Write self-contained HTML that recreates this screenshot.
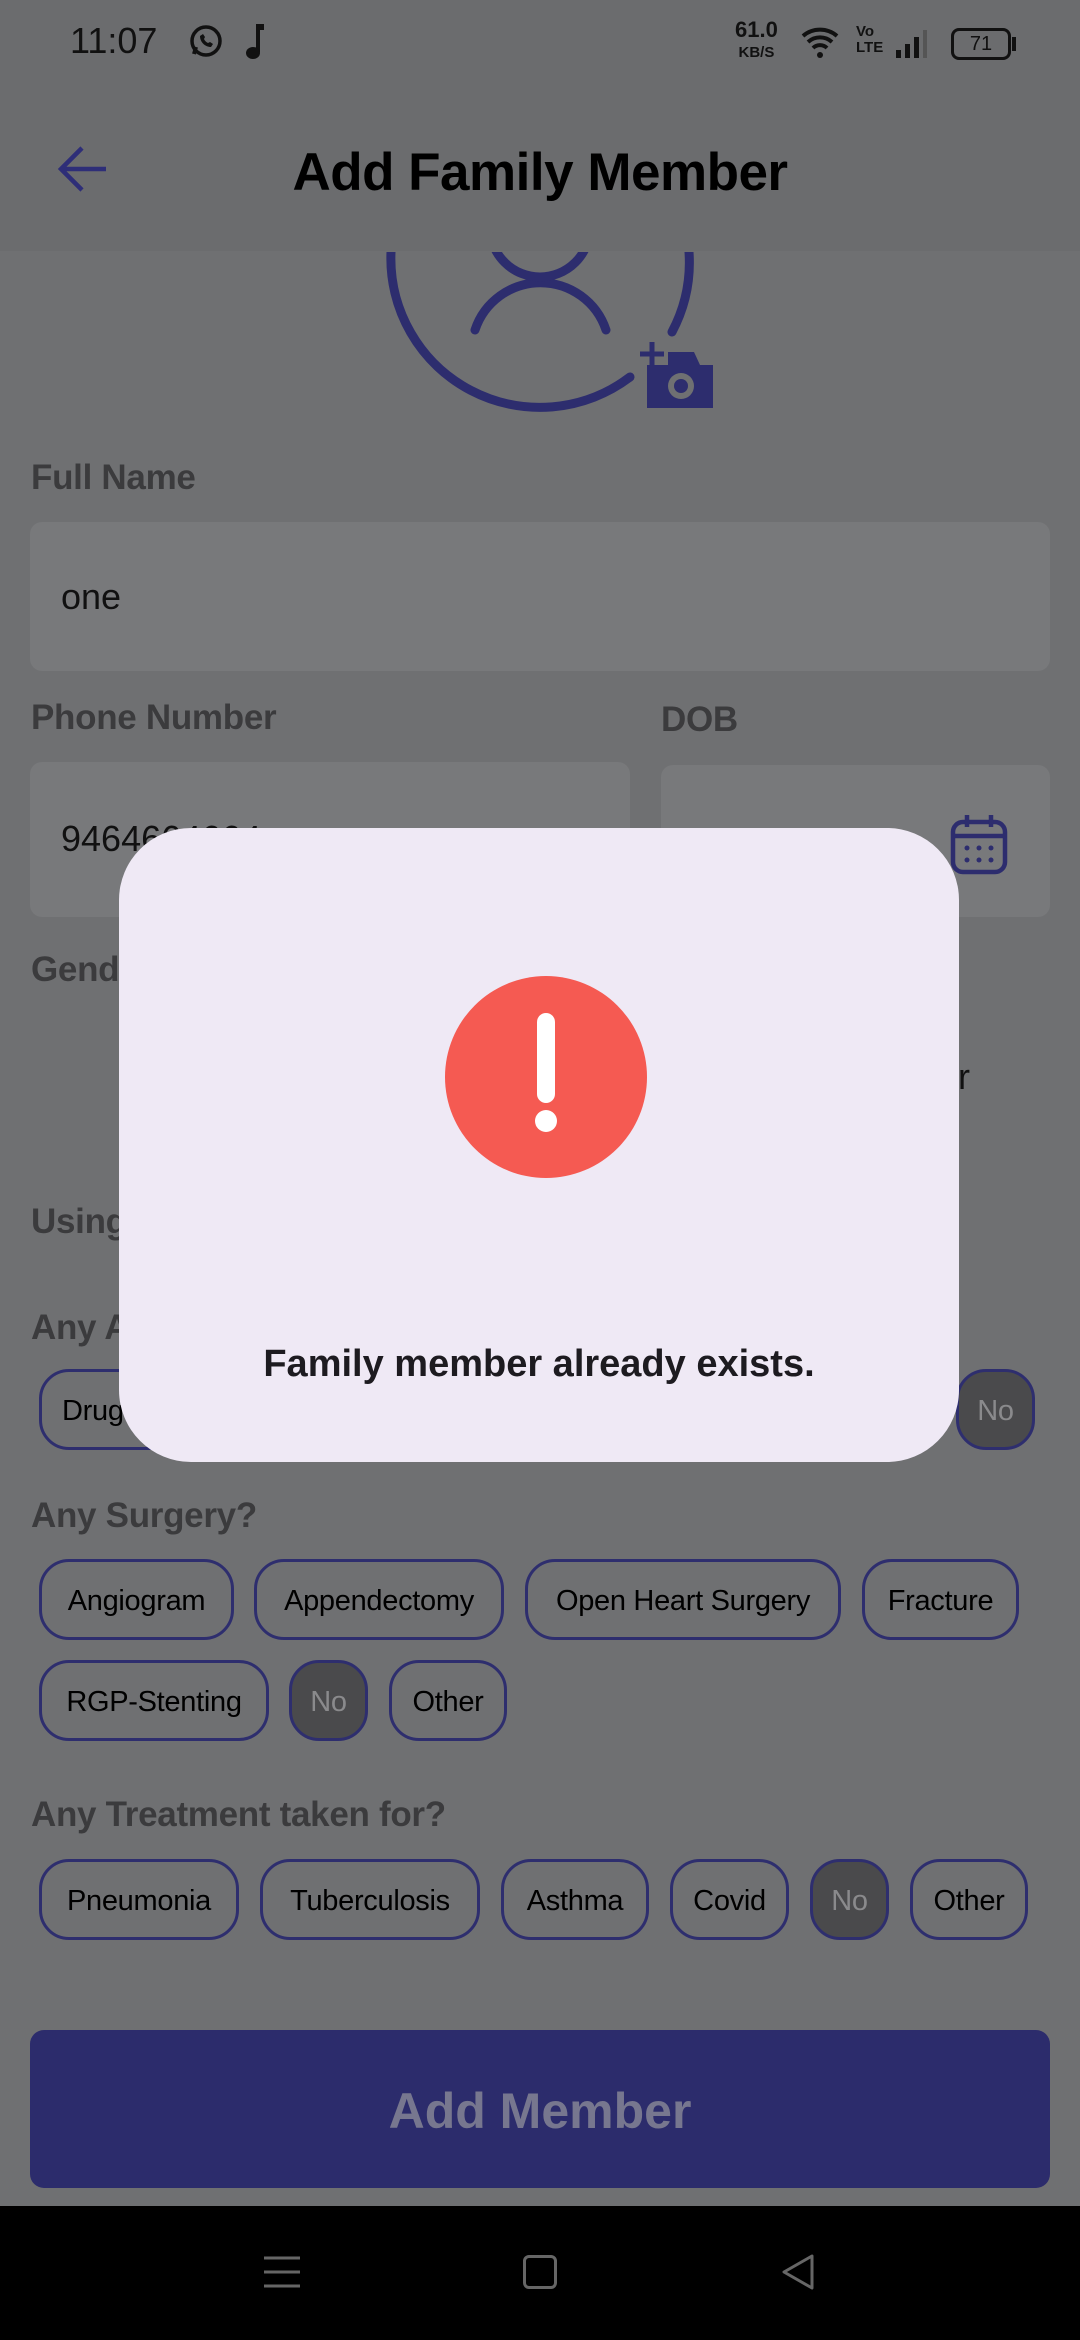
<!DOCTYPE html>
<html><head><meta charset="utf-8"><style>
*{margin:0;padding:0;box-sizing:border-box}
body{width:1080px;height:2340px;background:#6f7072;position:relative;overflow:hidden;font-family:"Liberation Sans",sans-serif}
.a{position:absolute}
.lbl{position:absolute;left:31px;font-size:35px;font-weight:bold;color:#3b3b3d;letter-spacing:-0.3px}
.fld{position:absolute;background:#78797b;border-radius:12px}
.chip{position:absolute;height:81px;border:3px solid #2e2e6e;border-radius:30px;display:flex;align-items:center;justify-content:center;font-size:29px;color:#000;letter-spacing:-0.3px;white-space:nowrap;padding-top:3px}
.dk{background:#4a4a4c;color:#8a8a8c}
</style></head><body>
<div class="a" style="left:0;top:0;width:1080px;height:251px;background:#6b6c6e"></div>
<div class="a" style="left:70px;top:20px;font-size:36px;color:#111">11:07</div>
<svg class="a" style="left:188px;top:24px" width="36" height="36" viewBox="0 0 36 36"><circle cx="18" cy="17" r="14" fill="none" stroke="#111" stroke-width="3.5"/><path d="M6 30 L8 23" stroke="#111" stroke-width="4"/><path d="M12 12c0 6 5 11 11 11l2-3-3-2-2 1c-2-1-3-2-4-4l1-2-2-3z" fill="#111"/></svg>
<svg class="a" style="left:244px;top:22px" width="26" height="40" viewBox="0 0 26 40"><path d="M14 2v28" stroke="#111" stroke-width="4"/><ellipse cx="9" cy="31" rx="7" ry="6" fill="#111"/><path d="M14 2h6v6h-6" fill="#111"/></svg>
<div class="a" style="left:735px;top:20px;font-size:22px;font-weight:bold;color:#111;line-height:20px;text-align:center">61.0<br><span style="font-size:15px">KB/S</span></div>
<svg class="a" style="left:800px;top:24px" width="44" height="36" viewBox="0 0 44 36"><path d="M3 12a26 26 0 0 1 34 0M8 18a18 18 0 0 1 24 0M13 24a10 10 0 0 1 14 0" fill="none" stroke="#111" stroke-width="4"/><circle cx="20" cy="31" r="3" fill="#111"/></svg>
<div class="a" style="left:856px;top:24px;font-size:15px;font-weight:bold;color:#111;line-height:16px">Vo<br>LTE</div>
<svg class="a" style="left:894px;top:28px" width="40" height="32" viewBox="0 0 40 32"><rect x="2" y="22" width="5" height="8" fill="#111"/><rect x="11" y="16" width="5" height="14" fill="#111"/><rect x="20" y="9" width="5" height="21" fill="#111"/><rect x="29" y="2" width="4" height="28" fill="#555"/></svg>
<div class="a" style="left:951px;top:28px;width:60px;height:32px;border:3px solid #111;border-radius:8px;font-size:20px;text-align:center;line-height:26px;color:#111">71</div>
<div class="a" style="left:1012px;top:37px;width:4px;height:14px;background:#111"></div>
<svg class="a" style="left:56px;top:144px" width="54" height="50" viewBox="0 0 54 50"><path d="M50 25H6M26 4L5 25l21 21" fill="none" stroke="#2e2e78" stroke-width="4.5"/></svg>
<div class="a" style="left:0;width:1080px;top:142px;text-align:center;font-size:53px;font-weight:bold;color:#000;letter-spacing:-0.5px">Add Family Member</div>
<svg class="a" style="left:380px;top:252px" width="350" height="170" viewBox="380 252 350 170"><path d="M689 252 A149 149 0 0 1 672 332" fill="none" stroke="#2d2d6e" stroke-width="9" stroke-linecap="round"/><path d="M391 252 A149 149 0 0 0 630 377" fill="none" stroke="#2d2d6e" stroke-width="9" stroke-linecap="round"/><path d="M475 330 A69 69 0 0 1 606 330" fill="none" stroke="#2d2d6e" stroke-width="9" stroke-linecap="round"/><circle cx="540" cy="227" r="50" fill="none" stroke="#2d2d6e" stroke-width="9"/><path d="M647 365h66v43h-66z" fill="#2d2d6e"/><path d="M668 352h26l6 13h-32z" fill="#2d2d6e"/><circle cx="681" cy="386" r="13" fill="#6f7072"/><circle cx="681" cy="386" r="7" fill="#2d2d6e"/><path d="M652 342v24M640 354h24" stroke="#2d2d6e" stroke-width="5"/></svg>
<div class="lbl" style="top:458px">Full Name</div>
<div class="fld" style="left:30px;top:522px;width:1020px;height:149px"></div>
<div class="a" style="left:61px;top:576px;font-size:36px;color:#111">one</div>
<div class="lbl" style="top:698px">Phone Number</div>
<div class="lbl" style="top:700px;left:661px">DOB</div>
<div class="fld" style="left:30px;top:762px;width:600px;height:155px"></div>
<div class="a" style="left:61px;top:818px;font-size:36px;color:#111">9464664664</div>
<div class="fld" style="left:661px;top:765px;width:389px;height:152px"></div>
<svg class="a" style="left:949px;top:812px" width="60" height="64" viewBox="0 0 60 64"><rect x="4" y="10" width="52" height="50" rx="10" fill="none" stroke="#2d2d6e" stroke-width="4.5"/><path d="M4 24h52M18 3v12M42 3v12" stroke="#2d2d6e" stroke-width="4.5"/><g fill="#2d2d6e"><circle cx="18" cy="36" r="2.5"/><circle cx="30" cy="36" r="2.5"/><circle cx="42" cy="36" r="2.5"/><circle cx="18" cy="48" r="2.5"/><circle cx="30" cy="48" r="2.5"/><circle cx="42" cy="48" r="2.5"/></g></svg>
<div class="lbl" style="top:950px">Gender</div>
<div class="a" style="left:880px;top:1056px;font-size:36px;color:#111">Other</div>
<div class="lbl" style="top:1202px">Using</div>
<div class="a" style="left:910px;top:1202px;font-size:36px;color:#333">No</div>
<div class="lbl" style="top:1308px">Any Allergy?</div>
<div class="chip" style="left:39px;top:1369px;width:160px;justify-content:flex-start;padding-left:20px">Drug</div>
<div class="chip dk" style="left:956px;top:1369px;width:79px">No</div>
<div class="lbl" style="top:1496px">Any Surgery?</div>
<div class="chip" style="left:39px;top:1559px;width:195px">Angiogram</div>
<div class="chip" style="left:254px;top:1559px;width:250px">Appendectomy</div>
<div class="chip" style="left:525px;top:1559px;width:316px">Open Heart Surgery</div>
<div class="chip" style="left:862px;top:1559px;width:157px">Fracture</div>
<div class="chip" style="left:39px;top:1660px;width:230px">RGP-Stenting</div>
<div class="chip dk" style="left:289px;top:1660px;width:79px">No</div>
<div class="chip" style="left:389px;top:1660px;width:118px">Other</div>
<div class="lbl" style="top:1795px">Any Treatment taken for?</div>
<div class="chip" style="left:39px;top:1859px;width:200px">Pneumonia</div>
<div class="chip" style="left:260px;top:1859px;width:220px">Tuberculosis</div>
<div class="chip" style="left:501px;top:1859px;width:148px">Asthma</div>
<div class="chip" style="left:670px;top:1859px;width:119px">Covid</div>
<div class="chip dk" style="left:810px;top:1859px;width:79px">No</div>
<div class="chip" style="left:910px;top:1859px;width:118px">Other</div>
<div class="a" style="left:30px;top:2030px;width:1020px;height:158px;background:#2c2c6c;border-radius:14px;display:flex;align-items:center;justify-content:center;font-size:50px;font-weight:bold;color:#77778f;padding-top:4px">Add Member</div>
<div class="a" style="left:0;top:2206px;width:1080px;height:134px;background:#000"></div>
<svg class="a" style="left:262px;top:2252px" width="40" height="40" viewBox="0 0 40 40"><path d="M2 6h36M2 20h36M2 34h36" stroke="#666" stroke-width="3"/></svg>
<div class="a" style="left:523px;top:2255px;width:34px;height:34px;border:3px solid #666;border-radius:6px"></div>
<svg class="a" style="left:778px;top:2252px" width="40" height="40" viewBox="0 0 40 40"><path d="M34 4L6 20l28 16z" fill="none" stroke="#666" stroke-width="3" stroke-linejoin="round"/></svg>
<div class="a" style="left:119px;top:828px;width:840px;height:634px;background:#efe9f5;border-radius:72px"></div>
<div class="a" style="left:445px;top:976px;width:202px;height:202px;border-radius:50%;background:#f55a52"></div>
<div class="a" style="left:537px;top:1013px;width:18px;height:90px;border-radius:9px;background:#fff"></div>
<div class="a" style="left:535px;top:1110px;width:22px;height:22px;border-radius:50%;background:#fff"></div>
<div class="a" style="left:119px;top:1343px;width:840px;text-align:center;font-size:38px;font-weight:bold;color:#1d1b20">Family member already exists.</div>
</body></html>
